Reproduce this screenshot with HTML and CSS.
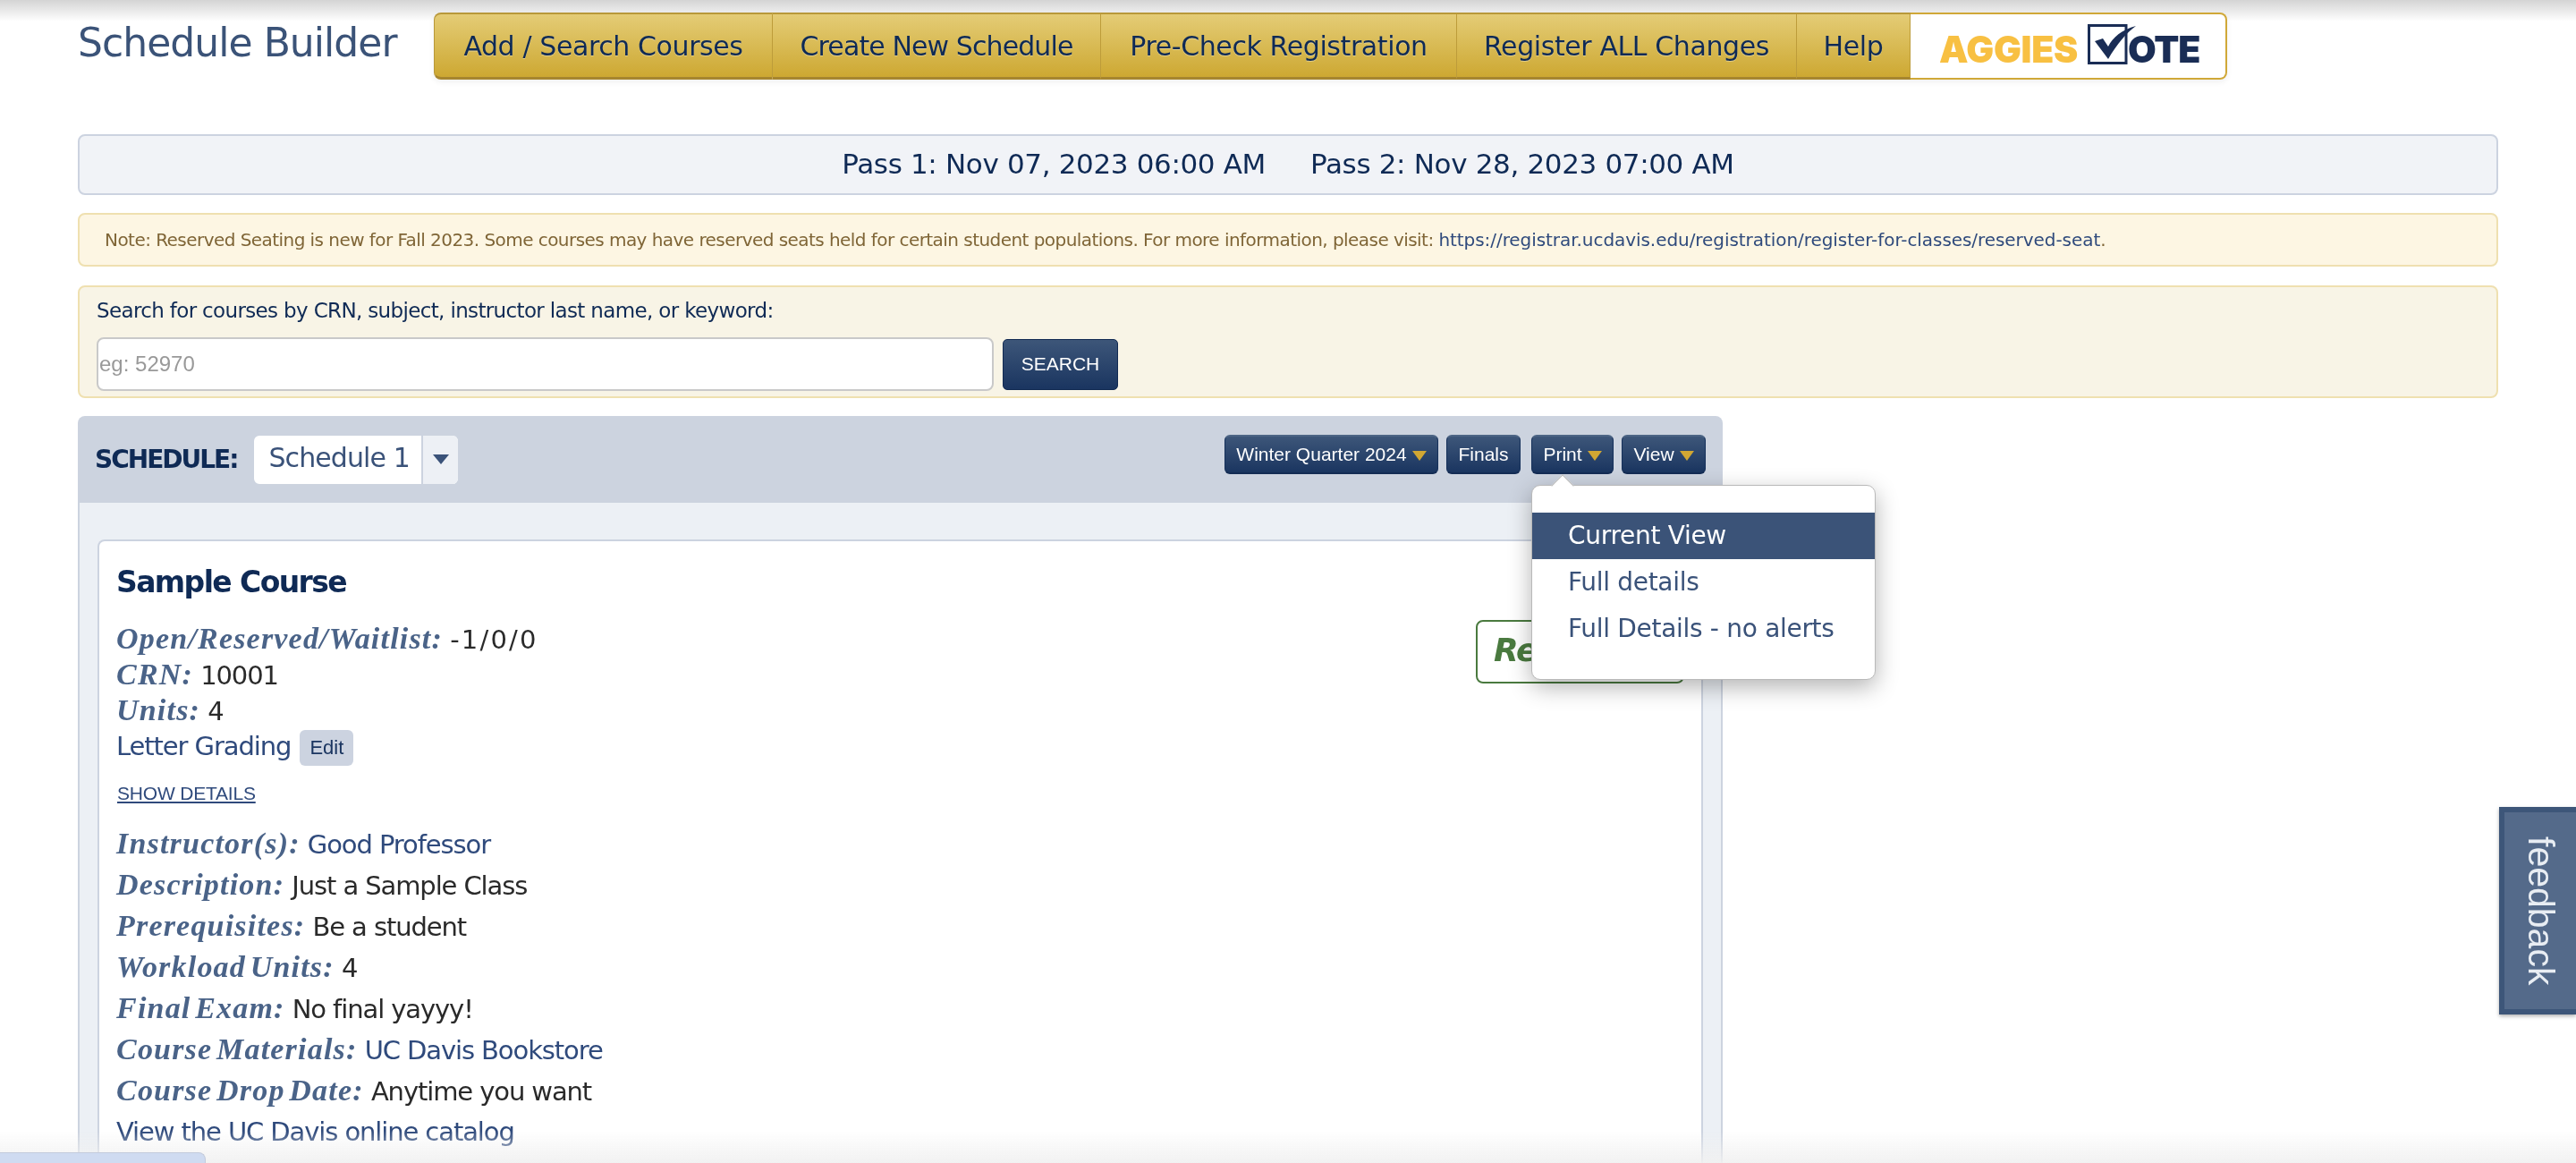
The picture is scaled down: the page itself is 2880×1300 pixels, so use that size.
FILE: index.html
```html
<!DOCTYPE html>
<html lang="en">
<head>
<meta charset="utf-8">
<title>Schedule Builder</title>
<link rel="stylesheet" href="styles.css">
</head>
<body>
<div class="shade-top"></div>
<div class="page">
  <header class="top">
    <h1 class="brand">Schedule Builder</h1>
    <nav class="menu">
      <a class="menu-item w1">Add / Search Courses</a>
      <a class="menu-item w2">Create New Schedule</a>
      <a class="menu-item w3">Pre-Check Registration</a>
      <a class="menu-item w4">Register ALL Changes</a>
      <a class="menu-item w5">Help</a>
      <a class="vote">
        <span class="vote-a">AGGIES</span>
        <svg class="vote-check" viewBox="0 0 54 45" width="54" height="45" aria-hidden="true">
          <path d="M1.5 1.5H43V43.5H1.5Z" fill="none" stroke="#1a2d55" stroke-width="3"/>
          <path d="M8 19 L17 16 L23 25 C28 15 38 6 54 2 C43 10 33 22 23 39 Z" fill="#1a2d55"/>
        </svg>
        <span class="vote-b">OTE</span>
      </a>
    </nav>
  </header>

  <div class="pass">
    <span>Pass 1: Nov 07, 2023 06:00 AM</span>
    <span>Pass 2: Nov 28, 2023 07:00 AM</span>
  </div>

  <div class="note"><span>Note: Reserved Seating is new for Fall 2023. Some courses may have reserved seats held for certain student populations. For more information, please visit: <a class="note-link">https://registrar.ucdavis.edu/registration/register-for-classes/reserved-seat</a>.</span></div>

  <form class="search">
    <label class="search-label" for="q">Search for courses by CRN, subject, instructor last name, or keyword:</label>
    <div class="search-row">
      <input id="q" class="search-input" type="text" placeholder="eg: 52970">
      <button class="search-btn" type="button">SEARCH</button>
    </div>
  </form>

  <section class="panel">
    <div class="panel-head">
      <div class="sched">
        <span class="sched-label">SCHEDULE:</span>
        <div class="select">
          <span class="select-val">Schedule 1</span>
          <span class="select-arrow"><i class="caret caret-blue"></i></span>
        </div>
      </div>
      <div class="tools">
        <button class="tool t-winter" type="button">Winter Quarter 2024<i class="caret"></i></button>
        <button class="tool t-finals" type="button">Finals</button>
        <div class="tool-wrap">
          <button class="tool t-print" type="button">Print<i class="caret"></i></button>
          <div class="dropdown">
            <a class="dd-item active">Current View</a>
            <a class="dd-item">Full details</a>
            <a class="dd-item">Full Details - no alerts</a>
          </div>
        </div>
        <button class="tool t-view" type="button">View<i class="caret"></i></button>
      </div>
    </div>
    <div class="panel-body">
      <article class="card">
        <div class="card-top">
          <div>
            <h2 class="course">Sample Course</h2>
            <div class="row-s"><b class="lbl">Open/Reserved/Waitlist:</b> <span class="val val-wide">-1/0/0</span></div>
            <div class="row-s"><b class="lbl">CRN:</b> <span class="val">10001</span></div>
            <div class="row-s"><b class="lbl">Units:</b> <span class="val">4</span></div>
            <div class="row-s"><a class="link">Letter Grading</a> <button class="edit" type="button">Edit</button></div>
          </div>
          <div class="status">Registered</div>
        </div>
        <a class="show">SHOW DETAILS</a>
        <div class="row-l"><b class="lbl">Instructor(s):</b> <a class="link">Good Professor</a></div>
        <div class="row-l"><b class="lbl">Description:</b> <span class="val">Just a Sample Class</span></div>
        <div class="row-l"><b class="lbl">Prerequisites:</b> <span class="val">Be a student</span></div>
        <div class="row-l"><b class="lbl">Workload Units:</b> <span class="val">4</span></div>
        <div class="row-l"><b class="lbl">Final Exam:</b> <span class="val">No final yayyy!</span></div>
        <div class="row-l"><b class="lbl">Course Materials:</b> <a class="link">UC Davis Bookstore</a></div>
        <div class="row-l"><b class="lbl">Course Drop Date:</b> <span class="val">Anytime you want</span></div>
        <div class="row-l"><a class="link">View the UC Davis online catalog</a></div>
      </article>
    </div>
  </section>
</div>
<a class="feedback">feedback</a>
<div class="shade-bottom"></div>
<div class="tab"></div>
</body>
</html>
```
FILE: styles.css
```css
* { box-sizing: border-box; }
html, body { margin: 0; height: 1300px; overflow: hidden; background: #fff; }
body { font-family: "DejaVu Sans", "Liberation Sans", sans-serif; color: #0f2a55; }
a { text-decoration: none; }
h1, h2 { margin: 0; font-weight: normal; }

.shade-top { position: fixed; top: 0; left: 0; right: 0; height: 24px; background: linear-gradient(#d4d4d4, #ffffff); }
.shade-bottom { position: fixed; bottom: 0; left: 0; right: 0; height: 36px; background: linear-gradient(rgba(240,240,240,0), rgba(240,240,240,.9)); z-index: 5; }
.tab { position: fixed; left: 0; bottom: 0; width: 230px; height: 12px; background: #cfdbf1; border-top: 1px solid #c3cbdc; border-right: 1px solid #c3cbdc; border-top-right-radius: 8px; z-index: 6; }

.page { position: relative; padding: 14px 87px 0 87px; width: 2880px; }

.top { display: flex; align-items: flex-start; height: 136px; }
.brand { width: 398px; font-size: 44px; letter-spacing: -.95px; line-height: 50px; margin-top: 9px; color: #3b5378; white-space: nowrap; }
.menu { display: flex; height: 75px; border-radius: 8px; box-shadow: 0 3px 6px rgba(0,0,0,.06); }
.menu-item { display: flex; align-items: center; justify-content: center; height: 75px; font-size: 30px; letter-spacing: -.4px; color: #0f2a55; text-shadow: 0 1px 0 rgba(255,255,255,.35); white-space: nowrap; background: linear-gradient(#e4cc76, #cda832); border-top: 2px solid #b8983a; border-bottom: 3px solid #a6852f; border-right: 1px solid #bd9c3a; }
.w1 { width: 379px; border-left: 1px solid #b8983a; border-radius: 8px 0 0 8px; }
.w2 { width: 367px; letter-spacing: -.9px; }
.w3 { width: 398px; }
.w4 { width: 380px; }
.w5 { width: 127px; }
.vote { display: flex; align-items: center; width: 354px; height: 75px; padding: 0 0 0 32px; border: 2px solid #d0a838; border-left: 0; border-radius: 0 8px 8px 0; background: #fff; }
.vote-a { font-family: Inter, "Liberation Sans", sans-serif; font-weight: 900; font-size: 41px; letter-spacing: -.3px; color: #f8c042; margin-top: 6px; }
.vote-check { margin-left: 11px; flex: none; margin-top: -4px; }
.vote-b { font-family: Inter, "Liberation Sans", sans-serif; font-weight: 900; font-size: 41px; letter-spacing: -1.2px; color: #1a2d55; margin-top: 6px; margin-left: -9px; }

.pass { display: flex; justify-content: center; gap: 50px; height: 68px; align-items: center; background: #f1f3f7; border: 2px solid #ccd3e0; border-radius: 8px; font-size: 31px; letter-spacing: -.35px; color: #0f2a55; padding-bottom: 2px; }
.note { margin-top: 20px; height: 60px; display: flex; align-items: center; padding: 0 0 0 28px; background: #fdf6e3; border: 2px solid #efe0b0; border-radius: 8px; font-size: 20px; letter-spacing: -.55px; color: #7f6536; }
.note-link { color: #2f4a7c; letter-spacing: -.06px; }

.search { margin-top: 21px; height: 126px; padding: 11px 19px 0 19px; background: #f8f4e6; border: 2px solid #efe0b0; border-radius: 8px; display: block; }
.search-label { display: block; font-size: 23px; letter-spacing: -.65px; line-height: 30px; color: #0f2a55; }
.search-row { display: flex; align-items: center; gap: 10px; margin-top: 15px; }
.search-input { width: 1003px; height: 60px; padding: 0 1px; border: 2px solid #c9c9c9; border-radius: 8px; background: #fff; font-family: "Liberation Sans", sans-serif; font-size: 24px; outline: 0; }
.search-input::placeholder { color: #999; opacity: 1; }
.search-btn { width: 129px; height: 57px; padding: 0; border: 1px solid #122a52; border-radius: 5px; background: linear-gradient(#3d5679, #1a3560); color: #fff; font-family: "Liberation Sans", sans-serif; font-size: 21px; }

.panel { margin-top: 20px; width: 1839px; }
.panel-head { display: flex; justify-content: space-between; align-items: center; height: 97px; padding: 0 19px 0 19px; background: #ccd3df; border-radius: 8px 8px 0 0; }
.sched { display: flex; align-items: center; gap: 19px; }
.sched-label { font-size: 28px; font-weight: bold; letter-spacing: -2px; color: #0f2a55; }
.select { display: flex; height: 54px; border-radius: 6px; overflow: hidden; background: #fff; }
.select-val { width: 187px; padding-left: 16px; line-height: 50px; font-size: 30px; letter-spacing: -.9px; color: #3a5279; white-space: nowrap; }
.select-arrow { width: 41px; display: flex; align-items: center; justify-content: center; background: #edf0f5; border-left: 2px solid #ccd3df; }
.caret { display: inline-block; width: 0; height: 0; margin-left: 6px; border-left: 8px solid transparent; border-right: 8px solid transparent; border-top: 11px solid #d1a733; }
.caret-blue { margin-left: 0; border-left-width: 9px; border-right-width: 9px; border-top-color: #3a5279; }

.tools { display: flex; align-items: center; gap: 9px; margin-top: -11px; }
.tool { height: 44px; padding: 0; border: 1px solid #15305a; border-top: 2px solid #4d6585; border-bottom: 2px solid #142c54; border-radius: 6px; background: linear-gradient(#3d5679, #1a3560); color: #fff; font-family: "Liberation Sans", sans-serif; font-size: 21px; white-space: nowrap; }
.t-winter { width: 239px; }
.t-finals { width: 83px; }
.t-print { width: 92px; }
.t-view { width: 94px; }
.tool-wrap { position: relative; display: flex; margin-left: 3px; }

.dropdown { position: absolute; top: 56px; left: 0; width: 385px; padding: 30px 0; background: #fff; border: 1px solid #b9b9b9; border-radius: 10px; box-shadow: 0 8px 26px rgba(0,0,0,.3); z-index: 4; }
.dropdown::before { content: ""; position: absolute; top: -9px; left: 25px; width: 17px; height: 17px; background: #fff; border-left: 1px solid #b9b9b9; border-top: 1px solid #b9b9b9; transform: rotate(45deg); }
.dd-item { display: block; height: 52px; line-height: 52px; padding-left: 40px; font-size: 28px; letter-spacing: -.3px; color: #3a5279; white-space: nowrap; }
.dd-item.active { background: #3b5378; color: #fff; }

.panel-body { height: 738px; padding: 41px 20px 0 20px; background: #ecf0f5; border-left: 2px solid #ccd3df; border-right: 2px solid #ccd3df; }
.card { height: 697px; padding: 23px 19px 0 19px; background: #fff; border: 2px solid #ccd3e0; border-bottom: 0; border-radius: 8px 8px 0 0; }
.card-top { display: flex; justify-content: space-between; align-items: flex-start; }
.course { font-size: 33px; font-weight: bold; letter-spacing: -1.6px; line-height: 46px; color: #0f2a55; margin-bottom: 20px; }
.row-s { height: 40px; line-height: 40px; font-size: 29px; letter-spacing: -1.1px; white-space: nowrap; }
.row-l { height: 46px; line-height: 46px; font-size: 29px; letter-spacing: -1.1px; white-space: nowrap; }
.lbl { font-family: "Liberation Serif", serif; font-style: italic; font-weight: bold; font-size: 34px; letter-spacing: 1.2px; word-spacing: -5px; color: #4a6388; }
.val { color: #2a2a2a; }
.val-wide { letter-spacing: 2.2px; }
.link { color: #2f4a7c; }
.edit { width: 60px; height: 40px; padding: 0; vertical-align: 1px; margin-left: 2px; border: 0; border-radius: 6px; background: #ccd3e0; color: #1a3560; font-family: "Liberation Sans", sans-serif; font-size: 22px; letter-spacing: 0; }
.status { margin-top: 65px; width: 233px; height: 71px; padding-left: 18px; line-height: 64px; font-size: 36px; font-style: italic; font-weight: bold; letter-spacing: -1px; color: #4a7a3f; border: 2px solid #4a7a3f; border-radius: 8px; background: #fff; }
.show { display: block; width: max-content; margin: 18px 0 18px 1px; font-family: "Liberation Sans", sans-serif; font-size: 21px; line-height: 30px; letter-spacing: -.2px; color: #2f4a7c; text-decoration: underline; }

.feedback { position: fixed; right: 0; top: 902px; width: 86px; height: 232px; display: flex; align-items: center; justify-content: center; writing-mode: vertical-rl; font-family: "Liberation Sans", sans-serif; font-size: 41px; color: #e8edf3; background: #546a8a; border: 6px solid #3d5679; border-right: 0; box-shadow: 0 2px 4px rgba(0,0,0,.3); }
```
